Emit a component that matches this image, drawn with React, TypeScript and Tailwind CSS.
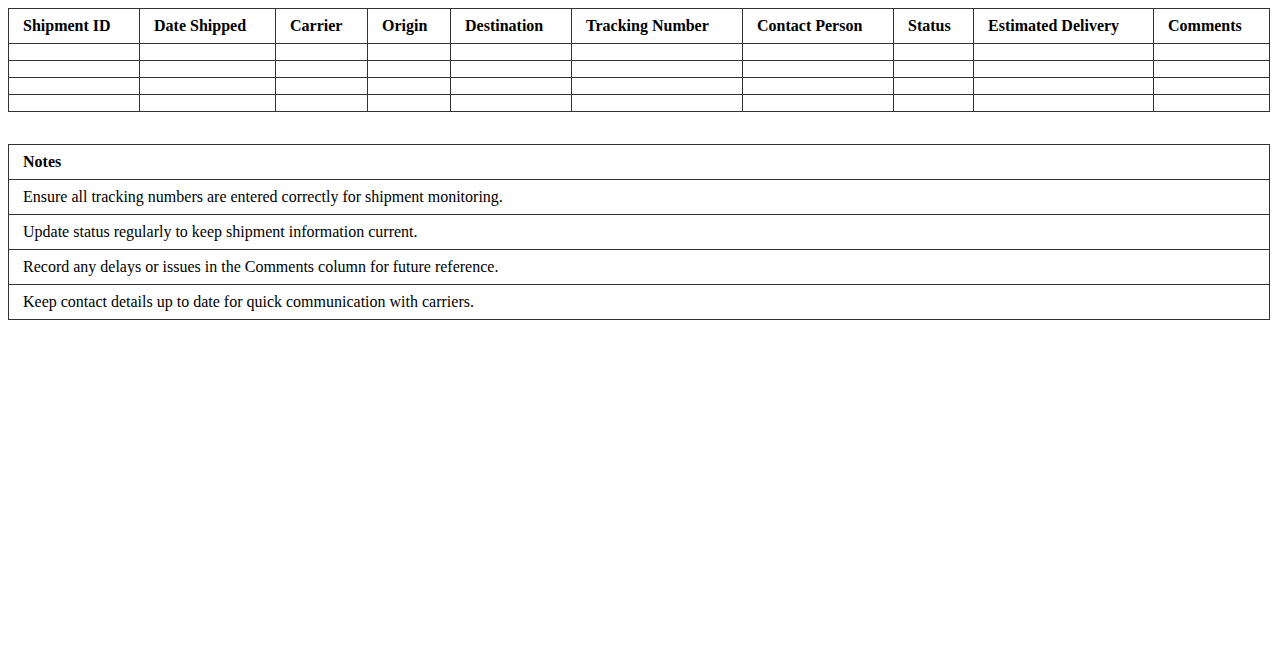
const columns = [
  { label: 'Shipment ID', w: 'w-[131px]' },
  { label: 'Date Shipped', w: 'w-[136px]' },
  { label: 'Carrier', w: 'w-[92px]' },
  { label: 'Origin', w: 'w-[83px]' },
  { label: 'Destination', w: 'w-[121px]' },
  { label: 'Tracking Number', w: 'w-[171px]' },
  { label: 'Contact Person', w: 'w-[151px]' },
  { label: 'Status', w: 'w-[80px]' },
  { label: 'Estimated Delivery', w: 'w-[180px]' },
  { label: 'Comments', w: '' },
];

const notes = [
  'Ensure all tracking numbers are entered correctly for shipment monitoring.',
  'Update status regularly to keep shipment information current.',
  'Record any delays or issues in the Comments column for future reference.',
  'Keep contact details up to date for quick communication with carriers.',
];

export default function App() {
  return (
    <div className="min-h-screen bg-white p-2 text-black text-base font-['Liberation_Serif','Times_New_Roman',serif]">
      <table className="w-full border-collapse">
        <thead>
          <tr>
            {columns.map((c) => (
              <th
                key={c.label}
                className={`${c.w} border border-[#333] px-[14px] py-2 text-left font-bold leading-[18px]`}
              >
                {c.label}
              </th>
            ))}
          </tr>
        </thead>
        <tbody>
          {[0, 1, 2, 3].map((r) => (
            <tr key={r}>
              {columns.map((c) => (
                <td key={c.label} className="border border-[#333] px-[14px] py-2" />
              ))}
            </tr>
          ))}
        </tbody>
      </table>

      <table className="mt-8 w-full border-collapse">
        <thead>
          <tr>
            <th className="border border-[#333] px-[14px] py-2 text-left font-bold leading-[18px]">
              Notes
            </th>
          </tr>
        </thead>
        <tbody>
          {notes.map((n) => (
            <tr key={n}>
              <td className="border border-[#333] px-[14px] py-2 leading-[18px]">{n}</td>
            </tr>
          ))}
        </tbody>
      </table>
    </div>
  );
}
